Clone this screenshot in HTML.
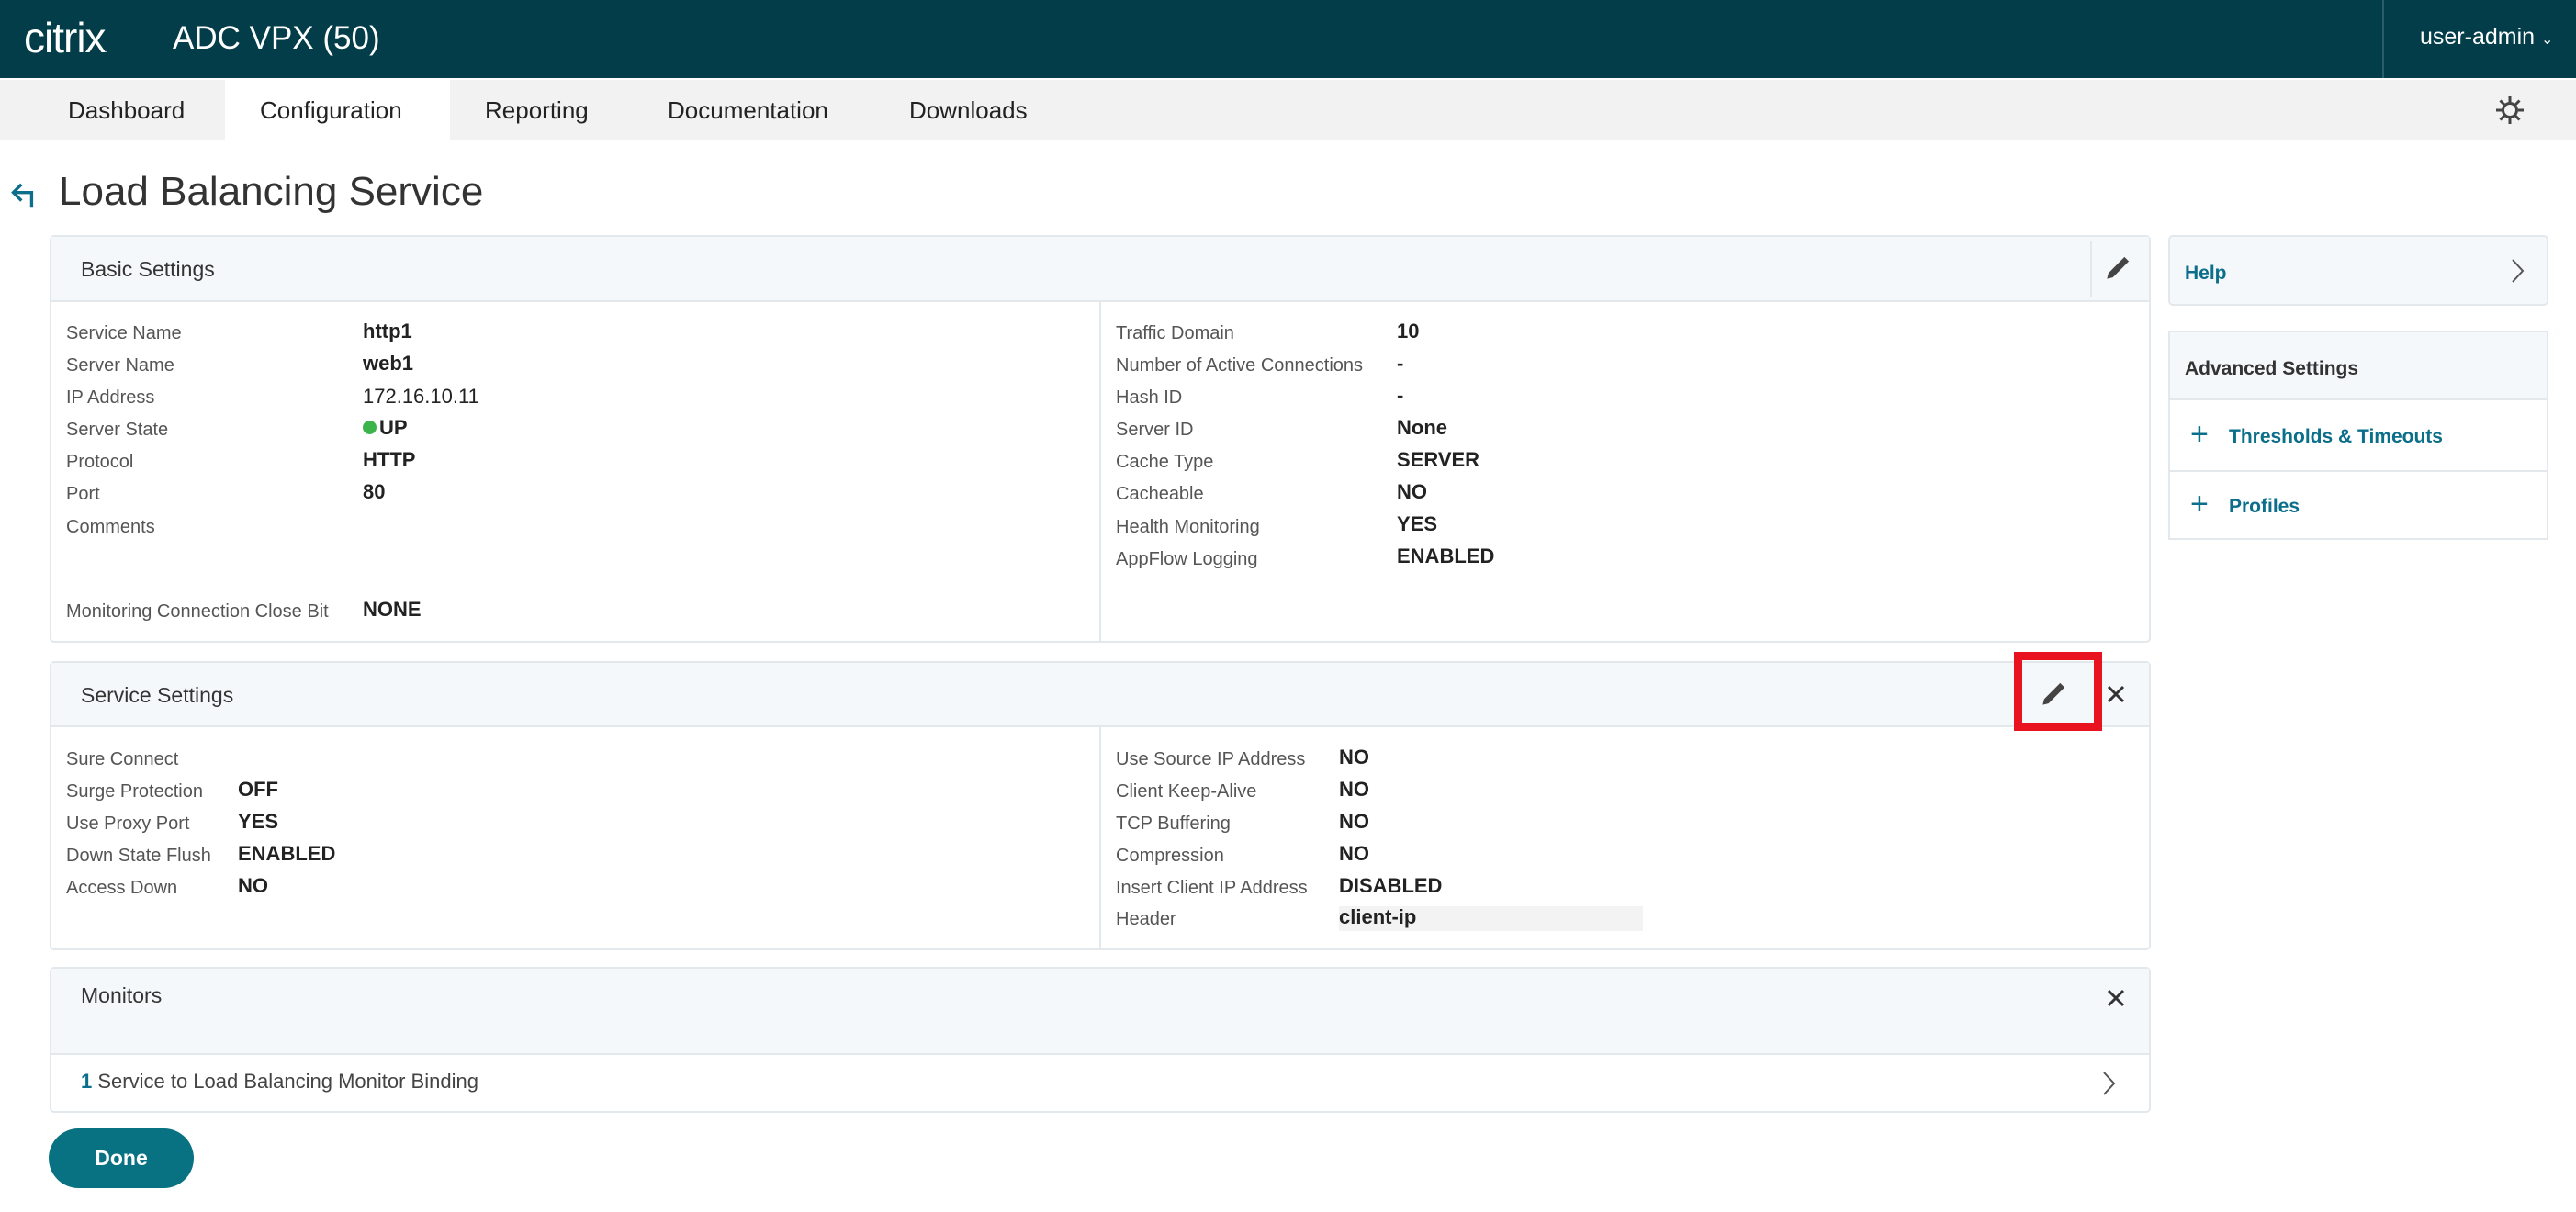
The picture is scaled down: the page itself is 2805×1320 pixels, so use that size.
<!DOCTYPE html>
<html><head><meta charset="utf-8"><style>
*{margin:0;padding:0;box-sizing:border-box}
body{width:2805px;height:1320px;position:relative;background:#fff;font-family:"Liberation Sans",sans-serif;overflow:hidden;color:#333}
.a{position:absolute;white-space:nowrap}
.top{position:absolute;left:0;top:0;width:2805px;height:85px;background:#033d49}
.nav{position:absolute;left:0;top:87px;width:2805px;height:66px;background:#f2f2f2}
.navi{position:absolute;top:87px;height:66px;line-height:66px;font-size:26px;color:#222}
.panel{position:absolute;left:54px;width:2288px;border:2px solid #e3e8ec;border-radius:5px;background:#fff}
.ph{position:absolute;left:0;top:0;width:100%;background:#f5f8fa;border-bottom:2px solid #e3e8ec}
.pt{position:absolute;left:32px;font-size:23px;color:#333}
.l{position:absolute;font-size:20px;color:#555;white-space:nowrap}
.v{position:absolute;font-size:22px;color:#222;font-weight:bold;white-space:nowrap}
.side{position:absolute;left:2361px;width:414px;border:2px solid #e3e8ec;background:#fff}
.lk{color:#0b6e8a}
</style></head><body>
<div class="top"></div>
<div class="a" style="left:26px;top:14px;font-size:46px;color:#fff;font-weight:300;letter-spacing:-1px">citrix<span style="font-size:10px">.</span></div>
<div class="a" style="left:188px;top:22px;font-size:35px;color:#fff">ADC VPX (50)</div>
<div style="position:absolute;left:2594px;top:0;width:2px;height:85px;background:#2a5f6a"></div>
<div class="a" style="left:2635px;top:26px;font-size:25px;color:#fff">user-admin <span style="font-size:16px">&#8964;</span></div>
<div class="nav"></div>
<div style="position:absolute;left:245px;top:87px;width:245px;height:66px;background:#fff"></div>
<div class="navi" style="left:74px">Dashboard</div>
<div class="navi" style="left:283px">Configuration</div>
<div class="navi" style="left:528px">Reporting</div>
<div class="navi" style="left:727px">Documentation</div>
<div class="navi" style="left:990px">Downloads</div>
<svg class="a" style="left:2715px;top:102px" width="36" height="36" viewBox="0 0 24 24" fill="none" stroke="#444" stroke-width="2"><circle cx="12" cy="12" r="5"/><path d="M12 2v4M12 18v4M2 12h4M18 12h4M5 5l3 3M16 16l3 3M5 19l3-3M16 8l3-3"/></svg>
<svg class="a" style="left:10px;top:196px" width="40" height="34" viewBox="0 0 36 30" fill="none" stroke="#0b6e8a" stroke-width="3"><path d="M12 4L4 12l8 8M4 12h18v14"/></svg>
<div class="a" style="left:64px;top:184px;font-size:44px;color:#333">Load Balancing Service</div>

<div class="panel" style="top:256px;height:444px">
<div class="ph" style="height:71px"><div class="pt" style="top:22px">Basic Settings</div>
<div style="position:absolute;left:2220px;top:4px;width:2px;height:62px;background:#e3e8ec"></div>
<svg style="position:absolute;left:2232px;top:14px" width="38" height="38" viewBox="0 0 24 24"><path d="M4 20l1-4L16 5l3 3L8 19z" fill="#444"/></svg></div>
<div style="position:absolute;left:1141px;top:71px;width:2px;height:371px;background:#e3e8ec"></div>
</div>
<div class="l" style="left:72px;top:352px">Service Name</div><div class="v" style="left:395px;top:348px">http1</div>
<div class="l" style="left:72px;top:387px">Server Name</div><div class="v" style="left:395px;top:383px">web1</div>
<div class="l" style="left:72px;top:422px">IP Address</div><div class="v" style="left:395px;top:419px;font-weight:normal">172.16.10.11</div>
<div class="l" style="left:72px;top:457px">Server State</div><div class="v" style="left:395px;top:453px"><span style="display:inline-block;width:15px;height:15px;border-radius:50%;background:#3cb44b;margin-right:3px"></span>UP</div>
<div class="l" style="left:72px;top:492px">Protocol</div><div class="v" style="left:395px;top:488px">HTTP</div>
<div class="l" style="left:72px;top:527px">Port</div><div class="v" style="left:395px;top:523px">80</div>
<div class="l" style="left:72px;top:563px">Comments</div>
<div class="l" style="left:72px;top:655px">Monitoring Connection Close Bit</div><div class="v" style="left:395px;top:651px">NONE</div>
<div class="l" style="left:1215px;top:352px">Traffic Domain</div><div class="v" style="left:1521px;top:348px">10</div>
<div class="l" style="left:1215px;top:387px">Number of Active Connections</div><div class="v" style="left:1521px;top:383px">-</div>
<div class="l" style="left:1215px;top:422px">Hash ID</div><div class="v" style="left:1521px;top:418px">-</div>
<div class="l" style="left:1215px;top:457px">Server ID</div><div class="v" style="left:1521px;top:453px">None</div>
<div class="l" style="left:1215px;top:492px">Cache Type</div><div class="v" style="left:1521px;top:488px">SERVER</div>
<div class="l" style="left:1215px;top:527px">Cacheable</div><div class="v" style="left:1521px;top:523px">NO</div>
<div class="l" style="left:1215px;top:563px">Health Monitoring</div><div class="v" style="left:1521px;top:558px">YES</div>
<div class="l" style="left:1215px;top:598px">AppFlow Logging</div><div class="v" style="left:1521px;top:593px">ENABLED</div>

<div class="panel" style="top:720px;height:315px">
<div class="ph" style="height:70px"><div class="pt" style="top:22px">Service Settings</div>
<svg style="position:absolute;left:2162px;top:14px" width="38" height="38" viewBox="0 0 24 24"><path d="M4 20l1-4L16 5l3 3L8 19z" fill="#444"/></svg>
<svg style="position:absolute;left:2238px;top:24px" width="20" height="20" viewBox="0 0 20 20" stroke="#333" stroke-width="3"><path d="M2 2l16 16M18 2L2 18"/></svg></div>
<div style="position:absolute;left:1141px;top:70px;width:2px;height:243px;background:#e3e8ec"></div>
</div>
<div style="position:absolute;left:2193px;top:710px;width:96px;height:86px;border:9px solid #e8131f"></div>
<div class="l" style="left:72px;top:816px">Sure Connect</div>
<div class="l" style="left:72px;top:851px">Surge Protection</div><div class="v" style="left:259px;top:847px">OFF</div>
<div class="l" style="left:72px;top:886px">Use Proxy Port</div><div class="v" style="left:259px;top:882px">YES</div>
<div class="l" style="left:72px;top:921px">Down State Flush</div><div class="v" style="left:259px;top:917px">ENABLED</div>
<div class="l" style="left:72px;top:956px">Access Down</div><div class="v" style="left:259px;top:952px">NO</div>
<div class="l" style="left:1215px;top:816px">Use Source IP Address</div><div class="v" style="left:1458px;top:812px">NO</div>
<div class="l" style="left:1215px;top:851px">Client Keep-Alive</div><div class="v" style="left:1458px;top:847px">NO</div>
<div class="l" style="left:1215px;top:886px">TCP Buffering</div><div class="v" style="left:1458px;top:882px">NO</div>
<div class="l" style="left:1215px;top:921px">Compression</div><div class="v" style="left:1458px;top:917px">NO</div>
<div class="l" style="left:1215px;top:956px">Insert Client IP Address</div><div class="v" style="left:1458px;top:952px">DISABLED</div>
<div style="position:absolute;left:1458px;top:987px;width:331px;height:27px;background:#f3f3f3"></div>
<div class="l" style="left:1215px;top:990px">Header</div><div class="v" style="left:1458px;top:986px">client-ip</div>

<div class="panel" style="top:1053px;height:159px">
<div class="ph" style="height:94px"><div class="pt" style="top:16px">Monitors</div>
<svg style="position:absolute;left:2238px;top:22px" width="20" height="20" viewBox="0 0 20 20" stroke="#333" stroke-width="3"><path d="M2 2l16 16M18 2L2 18"/></svg></div>
<div class="a" style="left:32px;top:110px;font-size:22px;color:#444"><span class="lk" style="font-weight:bold">1</span> Service to Load Balancing Monitor Binding</div>
<svg style="position:absolute;left:2230px;top:110px" width="20" height="30" viewBox="0 0 20 30" fill="none" stroke="#555" stroke-width="2"><path d="M5 3l11 12L5 27"/></svg>
</div>
<div style="position:absolute;left:53px;top:1229px;width:158px;height:65px;border-radius:33px;background:#087283;color:#fff;font-size:23px;font-weight:bold;text-align:center;line-height:65px">Done</div>

<div class="side" style="top:256px;height:77px;background:#f5f8fa;border-radius:5px">
<div class="a lk" style="left:16px;top:28px;font-size:21px;font-weight:bold">Help</div>
<svg style="position:absolute;left:368px;top:22px" width="20" height="30" viewBox="0 0 20 30" fill="none" stroke="#555" stroke-width="2"><path d="M5 3l11 12L5 27"/></svg></div>
<div class="side" style="top:360px;height:228px">
<div style="position:absolute;left:0;top:0;width:100%;height:74px;background:#f5f8fa;border-bottom:2px solid #e3e8ec"></div>
<div class="a" style="left:16px;top:28px;font-size:21px;font-weight:bold;color:#333">Advanced Settings</div>
<div class="a lk" style="left:22px;top:92px;font-size:34px">+</div>
<div class="a lk" style="left:64px;top:102px;font-size:21px;font-weight:bold">Thresholds &amp; Timeouts</div>
<div style="position:absolute;left:0;top:150px;width:100%;height:2px;background:#e3e8ec"></div>
<div class="a lk" style="left:22px;top:168px;font-size:34px">+</div>
<div class="a lk" style="left:64px;top:178px;font-size:21px;font-weight:bold">Profiles</div>
</div>
</body></html>
